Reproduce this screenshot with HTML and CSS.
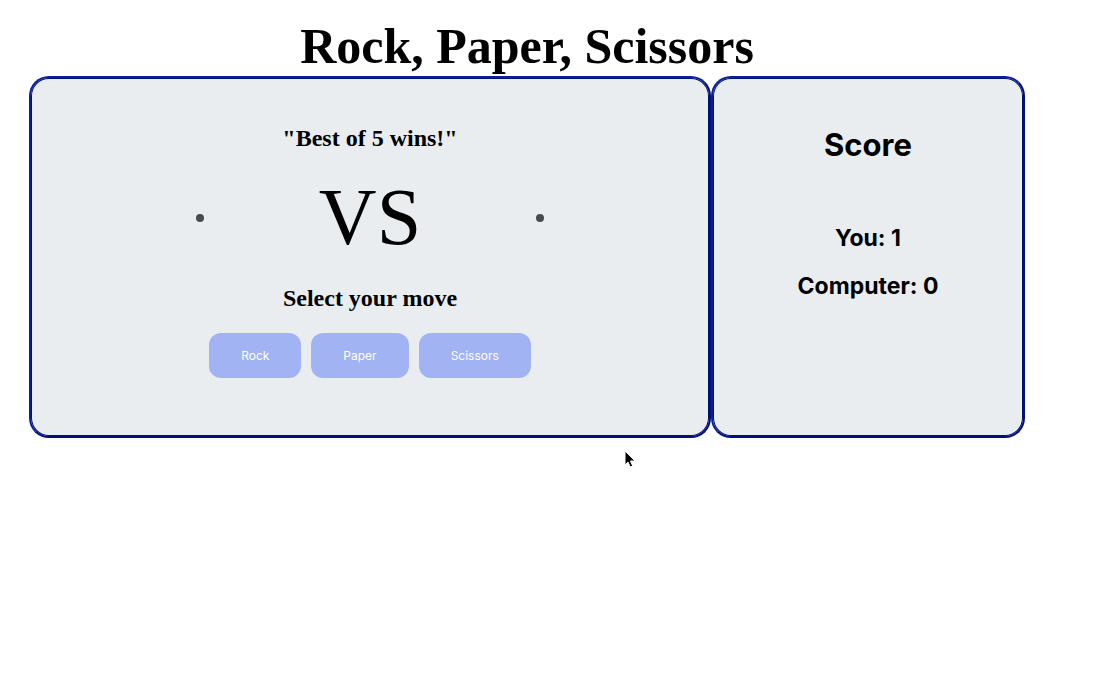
FILE: index.html
```html
<!DOCTYPE html>
<html lang="en">
<head>
<meta charset="utf-8">
<title>Rock, Paper, Scissors</title>
<link rel="stylesheet" href="styles.css">
</head>
<body>
<div class="page">
  <h1 class="title">Rock, Paper, Scissors</h1>
  <main class="board">
    <section class="panel game">
      <h2 class="message">"Best of 5 wins!"</h2>
      <div class="arena">
        <span class="dot"></span>
        <span class="versus">VS</span>
        <span class="dot"></span>
      </div>
      <h2 class="message">Select your move</h2>
      <div class="moves">
        <button class="move" type="button">Rock</button>
        <button class="move" type="button">Paper</button>
        <button class="move" type="button">Scissors</button>
      </div>
    </section>
    <section class="panel score">
      <h2 class="score-title">Score</h2>
      <p class="score-line">You: 1</p>
      <p class="score-line">Computer: 0</p>
    </section>
  </main>
</div>
<svg class="cursor" viewBox="0 0 12 19" width="12" height="19" aria-hidden="true">
  <path d="M1 1v14l3-3 2.200 5 2.500-1-2.200-5H11z" fill="#000" stroke="#fff" stroke-width="1"/>
</svg>
</body>
</html>
```
FILE: styles.css
```css
* {
  box-sizing: border-box;
}

body {
  margin: 0;
  background: #fff;
  color: #000;
  font-family: "Liberation Serif", "Times New Roman", serif;
}

.page {
  padding: 16px 69px 0 29px;
}

.title {
  margin: 0;
  font-size: 50px;
  line-height: 60px;
  text-align: center;
}

.board {
  display: grid;
  grid-template-columns: 682fr 314fr;
}

.panel {
  display: flex;
  flex-direction: column;
  align-items: center;
  border: 2px solid;
  border-color: #0a1f9c #000f80 #000f80 #0a1f9c;
  border-radius: 20px;
  background: #e9edf0;
  box-shadow: inset 0 0 0 1px #001078;
}

.game {
  padding: 45px 0 58px;
}

.message {
  margin: 0;
  font-size: 24px;
  line-height: 30px;
}

.arena {
  display: flex;
  align-items: center;
  justify-content: space-between;
  width: 348px;
  height: 130px;
}

.dot {
  width: 8px;
  height: 8px;
  border-radius: 50%;
  background: #47494b;
}

.versus {
  margin-bottom: 2px;
  font-size: 80px;
  line-height: 90px;
}

.moves {
  display: flex;
  gap: 10px;
  margin-top: 20px;
}

.move {
  padding: 0 32px;
  border: 0;
  border-radius: 12px;
  background: #a1b3f3;
  color: #fff;
  font-family: Inter, sans-serif;
  font-size: 12px;
  line-height: 45px;
}

.score {
  padding-top: 47px;
  font-family: Inter, sans-serif;
}

.score-title {
  margin: 0 0 58px;
  font-size: 31px;
  line-height: 40px;
}

.score-line {
  margin: 0 0 18px;
  font-size: 23px;
  font-weight: 700;
  line-height: 30px;
}

.cursor {
  position: absolute;
  top: 450px;
  left: 624px;
}
```
